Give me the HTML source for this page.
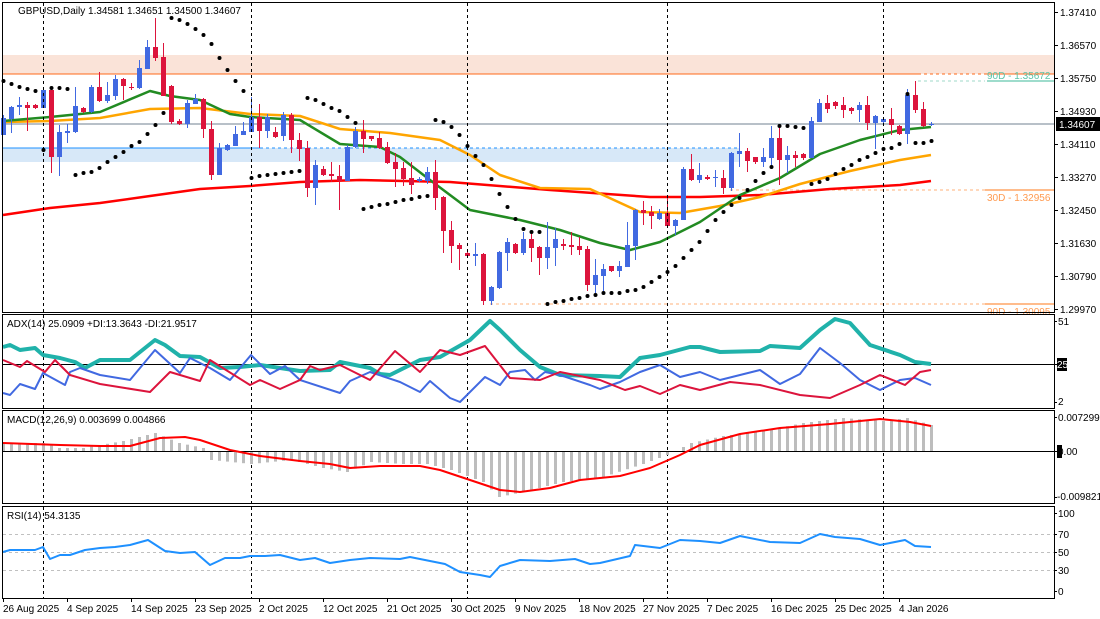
<!DOCTYPE html>
<html><head><meta charset="utf-8">
<style>
html,body{margin:0;padding:0;background:#fff;width:1100px;height:619px;overflow:hidden}
svg{display:block}
text{font-family:"Liberation Sans",sans-serif;font-size:10px;fill:#000}
</style></head>
<body>
<svg id="c" width="1100" height="619" viewBox="0 0 1100 619" xmlns="http://www.w3.org/2000/svg">
<!-- zones -->
<rect x="3" y="55" width="1051" height="19" fill="#fae3d8"/>
<rect x="3" y="148" width="737" height="14" fill="#d7e8f8"/>
<line x1="3" y1="74" x2="918" y2="74" stroke="#ff6a1a" stroke-width="1"/>
<line x1="918" y1="74" x2="985" y2="74" stroke="#ff6a1a" stroke-dasharray="3,3"/>
<line x1="985" y1="74" x2="1054" y2="74" stroke="#ff6a1a"/>
<line x1="918" y1="81" x2="985" y2="81" stroke="#9fd8c8" stroke-dasharray="3,3"/>
<line x1="987" y1="81" x2="1054" y2="81" stroke="#3cb89a"/>
<text x="987" y="79" style="fill:#5cc4a8">90D - 1.35672</text>
<line x1="3" y1="148" x2="260" y2="148" stroke="#1e90ff"/>
<line x1="260" y1="148" x2="740" y2="148" stroke="#1e90ff" stroke-dasharray="3,3"/>
<line x1="730" y1="190" x2="985" y2="190" stroke="#ffb27a" stroke-dasharray="3,3"/>
<line x1="985" y1="190" x2="1054" y2="190" stroke="#ff7a1a"/>
<text x="987" y="201" style="fill:#ff9a50">30D - 1.32956</text>
<line x1="490" y1="304" x2="985" y2="304" stroke="#ffb27a" stroke-dasharray="3,3"/>
<line x1="985" y1="304" x2="1054" y2="304" stroke="#ff7a1a"/>
<text x="987" y="315" style="fill:#ff9a50">90D - 1.30095</text>
<line x1="3" y1="124" x2="1054" y2="124" stroke="#708090"/>
<g id="ma"></g>
<g id="cd"></g>
<g id="sar"></g>
<!-- vertical separators -->
<g stroke="#000" stroke-dasharray="3,3" stroke-width="1">
<line x1="43.5" y1="3" x2="43.5" y2="598"/>
<line x1="251.5" y1="3" x2="251.5" y2="598"/>
<line x1="467.5" y1="3" x2="467.5" y2="598"/>
<line x1="667.5" y1="3" x2="667.5" y2="598"/>
<line x1="883.5" y1="3" x2="883.5" y2="598"/>
</g>
<!-- indicator lines -->
<line x1="3" y1="364.5" x2="1054" y2="364.5" stroke="#000"/>
<line x1="3" y1="451.5" x2="1054" y2="451.5" stroke="#000"/>
<g stroke="#c0c0c0" stroke-dasharray="3,3">
<line x1="3" y1="534.5" x2="1054" y2="534.5"/>
<line x1="3" y1="552.5" x2="1054" y2="552.5"/>
<line x1="3" y1="570.5" x2="1054" y2="570.5"/>
</g>
<g id="ind"></g>
<!-- pane borders -->
<g fill="none" stroke="#000" stroke-width="1">
<rect x="2.5" y="2.5" width="1052" height="310"/>
<rect x="2.5" y="314.5" width="1052" height="94"/>
<rect x="2.5" y="410.5" width="1052" height="93"/>
<rect x="2.5" y="506.5" width="1052" height="92"/>
</g>
<text x="18" y="14">GBPUSD,Daily  1.34581 1.34651 1.34500 1.34607</text>
<text x="7" y="327">ADX(14) 25.0909 +DI:13.3643 -DI:21.9517</text>
<text x="7" y="423">MACD(12,26,9) 0.003699 0.004866</text>
<text x="7" y="519">RSI(14) 54.3135</text>
<!-- right axis -->
<g id="ax"></g>
<rect x="1056" y="117" width="44" height="14" fill="#000"/>
<text x="1059" y="128" style="fill:#fff">1.34607</text>
<rect x="1057" y="358" width="10" height="13" fill="#000"/>
<text x="1057" y="368" style="fill:#fff">25</text>
<text x="1058" y="325">51</text>
<text x="1058" y="405">2</text>
<rect x="1057" y="445" width="5" height="13" fill="#000"/>
<text x="1058" y="455">0.00</text>
<text x="1058" y="421">0.007299</text>
<text x="1057" y="500">-0.009821</text>
<text x="1058" y="517">100</text>
<text x="1058" y="538">70</text>
<text x="1058" y="556">50</text>
<text x="1058" y="574">30</text>
<text x="1058" y="595">0</text>
<g id="dates"></g>
</svg>
<script>
var NS="http://www.w3.org/2000/svg";
function el(p,t,a,txt){var e=document.createElementNS(NS,t);for(var k in a)e.setAttribute(k,a[k]);if(txt!=null)e.textContent=txt;document.getElementById(p).appendChild(e);return e;}
function pl(p,pts,col,w){el(p,"polyline",{points:pts.map(function(q){return q[0]+","+q[1]}).join(" "),fill:"none",stroke:col,"stroke-width":w,"stroke-linejoin":"round"});}
// axis
var ax=[["1.37410",12],["1.36570",45],["1.35750",78],["1.34930",111],["1.34110",144],["1.33270",177],["1.32450",210],["1.31630",243],["1.30790",276],["1.29970",309]];
ax.forEach(function(a){el("ax","line",{x1:1054,y1:a[1]+.5,x2:1058,y2:a[1]+.5,stroke:"#000"});el("ax","text",{x:1060,y:a[1]+4},a[0]);});
[321,364,402,417,451,497,513,534,552,570,591].forEach(function(y){el("ax","line",{x1:1054,y1:y+.5,x2:1057,y2:y+.5,stroke:"#000"});});
var ds=["26 Aug 2025","4 Sep 2025","14 Sep 2025","23 Sep 2025","2 Oct 2025","12 Oct 2025","21 Oct 2025","30 Oct 2025","9 Nov 2025","18 Nov 2025","27 Nov 2025","7 Dec 2025","16 Dec 2025","25 Dec 2025","4 Jan 2026"];
ds.forEach(function(d,i){var x=3+64*i;el("dates","line",{x1:x+.5,y1:598,x2:x+.5,y2:602,stroke:"#000"});el("dates","text",{x:x,y:612},d);});
// candles [o,c,h,l]
var C=[[135,118,115,135],[119,107,106,133],[107,105,97,115],[105,108,102,131],[105,108,104,109],[108,90,89,108],[90,157,88,173],[157,132,125,176],[133,131,124,143],[132,106,87,133],
[108,112,107,113],[112,87,85,113],[87,101,72,102],[101,95,82,103],[96,79,75,100],[79,86,78,100],[87,88,83,90],[88,68,60,89],[69,47,40,69],[47,58,18,61],
[57,96,43,96],[86,122,85,124],[121,124,119,125],[124,103,100,128],[104,99,94,104],[99,129,98,138],[129,175,121,180],[175,148,143,175],[150,145,144,151],[146,134,126,146],
[135,131,122,135],[132,117,97,132],[117,131,104,148],[131,117,114,138],[132,137,127,138],[136,115,112,141],[115,140,113,153],[140,149,133,161],[148,188,141,197],[188,165,160,205],
[169,175,166,176],[174,176,162,182],[176,181,165,210],[181,147,145,181],[147,131,127,148],[131,139,120,153],[136,139,136,141],[138,148,132,149],[147,163,142,164],[162,169,153,187],
[168,179,162,186],[178,185,162,194],[181,179,177,182],[181,172,167,184],[172,198,160,210],[197,231,196,253],[230,246,221,263],[245,249,243,270],[253,256,252,258],[256,254,243,266],
[254,301,253,305],[301,287,286,305],[288,252,251,289],[253,242,238,271],[244,253,243,254],[253,239,232,255],[239,248,231,262],[247,258,246,275],[258,247,222,269],[248,239,228,266],
[244,246,239,250],[245,247,232,255],[246,250,237,255],[249,285,246,291],[285,275,259,293],[276,269,264,293],[266,271,266,272],[271,266,261,277],[267,245,222,267],[246,210,209,260],
[210,213,201,225],[212,216,206,229],[219,213,209,220],[213,226,198,227],[226,220,219,235],[220,169,167,220],[169,180,154,181],[180,175,163,183],[177,179,175,180],[178,177,170,187],
[178,188,170,194],[188,153,152,191],[154,151,133,167],[151,161,148,172],[157,162,157,164],[162,157,148,167],[158,138,126,167],[138,160,125,185],[160,155,146,173],[155,158,151,167],
[154,158,153,160],[158,121,117,158],[122,103,99,122],[103,109,95,113],[102,106,101,109],[105,110,97,118],[108,111,107,114],[110,105,102,122],[105,123,96,130],[123,116,115,149],
[122,119,117,125],[119,125,108,135],[126,134,125,135],[134,95,89,144],[95,110,81,113],[109,126,102,127],[125,124,122,126]];
C.forEach(function(b,k){var x=3+8*k,up=b[1]<b[0]||(b[1]==b[0]&&k==116),col=up?"#4169e1":"#dc143c";
var t=Math.min(b[0],b[1]),h=Math.max(Math.abs(b[0]-b[1]),1);
el("cd","line",{x1:x+.5,y1:b[2],x2:x+.5,y2:b[3],stroke:col});
el("cd","rect",{x:x-2,y:t,width:5,height:h,fill:col});});
// MAs
pl("ma",[[3,215],[50,208],[100,203],[150,196],[200,189],[250,186],[300,182],[360,180],[450,182],[550,190],[650,197],[700,197],[760,195],[830,189],[900,185],[931,181]],"#ff0000",2.5);
pl("ma",[[3,122],[50,121],[100,118],[150,109],[200,108],[250,114],[300,116],[340,129],[390,133],[440,140],[470,155],[500,175],[540,188],[590,189],[640,212],[680,213],[720,206],[760,197],[800,184],[850,171],[900,160],[931,155]],"#ffa500",2.5);
pl("ma",[[3,121],[50,117],[100,112],[150,91],[170,96],[200,100],[230,114],[250,117],[300,120],[340,144],[380,147],[400,157],[430,180],[470,210],[520,220],[560,230],[600,243],[630,250],[660,242],[700,222],[740,195],[780,178],[820,154],[860,140],[900,130],[931,127]],"#228b22",2.5);
// SAR
var S=[[3,81],[11,84],[19,87],[27,89],[35,91],[43,150],[51,88],[59,88],[67,89],[75,175],[83,173],[91,172],[99,168],[107,162],[115,157],[123,152],[131,146],[139,142],[147,134],[155,125],[163,113],[171,18],[179,20],[187,24],[195,29],[203,35],[211,44],[219,58],[227,70],[235,81],[243,91],[251,178],[259,176],[267,175],[275,174],[283,173],[291,172],[299,171],[307,98],[315,100],[323,104],[331,108],[339,111],[347,117],[355,123],[363,209],[371,207],[379,205],[387,204],[395,202],[403,200],[411,199],[419,197],[427,196],[435,120],[443,122],[451,127],[459,135],[467,146],[475,156],[483,165],[491,179],[499,194],[507,207],[515,219],[523,229],[531,232],[539,232],[547,304],[555,302],[563,301],[571,299],[579,298],[587,296],[595,295],[603,293],[611,293],[619,293],[627,291],[635,290],[643,287],[651,282],[659,277],[667,272],[675,266],[683,258],[691,250],[699,242],[707,231],[715,220],[723,212],[731,205],[739,198],[747,190],[755,181],[763,173],[771,167],[779,126],[787,126],[795,127],[803,128],[811,184],[819,182],[827,179],[835,174],[843,169],[851,165],[859,160],[867,157],[875,153],[883,149],[891,148],[899,144],[907,94],[915,143],[923,143],[931,141]];
S.forEach(function(p){el("sar","circle",{cx:p[0]+.5,cy:p[1],r:2,fill:"#000"});});
// MACD histogram
var H=[[0,-8],[5,-8],[7,-3],[10,-3],[15,-10],[19,-18],[22,-8],[25,-3],[26,8],[31,12],[36,8],[40,16],[43,20],[46,10],[50,12],[53,12],[56,18],[60,30],[62,45],[65,40],[70,30],[75,25],[80,12],[84,0],[86,-8],[90,-15],[95,-20],[100,-28],[105,-33],[110,-30],[113,-33],[116,-26]];
function hv(k){for(var i=0;i<H.length-1;i++){if(k>=H[i][0]&&k<=H[i+1][0]){var t=(k-H[i][0])/(H[i+1][0]-H[i][0]);return H[i][1]+t*(H[i+1][1]-H[i][1]);}}return 0;}
for(var k=0;k<117;k++){var v=hv(k),x=3+8*k;if(Math.abs(v)<1)continue;el("ind","rect",{x:x-1,y:v<0?451+v:452,width:3,height:Math.abs(v),fill:"#bdbdbd"});}
pl("ind",[[3,443],[60,445],[100,446],[130,446],[160,438],[185,437],[200,440],[230,450],[260,456],[300,461],[330,464],[350,468],[380,466],[420,466],[440,470],[470,480],[500,490],[520,492],[550,488],[580,480],[620,476],[650,468],[680,455],[700,445],[740,434],[780,428],[830,424],[880,419],[910,422],[931,426]],"#ff0000",2);
// ADX
pl("ind",[[3,347],[10,345],[20,350],[35,348],[43,355],[60,358],[75,362],[85,368],[100,360],[130,360],[155,340],[165,345],[180,356],[200,357],[220,368],[240,367],[260,365],[300,371],[330,370],[340,362],[370,368],[380,374],[390,375],[420,360],[440,357],[470,340],[490,321],[500,330],[520,350],[540,367],[560,375],[600,376],[620,377],[640,358],[660,355],[690,347],[700,347],[720,352],[760,351],[770,346],[800,348],[820,330],[835,319],[850,323],[870,345],[900,355],[915,362],[931,364]],"#20b2aa",4);
pl("ind",[[3,393],[10,395],[20,384],[35,389],[43,373],[65,385],[70,372],[80,368],[100,375],[130,380],[155,350],[180,373],[190,358],[210,368],[230,380],[251,355],[270,374],[285,366],[300,380],[340,393],[350,381],[370,372],[400,382],[420,392],[430,381],[450,398],[460,402],[485,377],[500,385],[510,372],[525,370],[535,380],[545,372],[560,375],[590,385],[600,389],[620,382],[640,372],[660,365],[680,377],[700,372],[720,380],[760,370],[780,384],[800,374],[820,348],[840,363],[860,380],[880,390],[900,380],[915,378],[931,385]],"#4169e1",2);
pl("ind",[[3,360],[20,367],[27,361],[45,372],[55,360],[70,375],[100,384],[125,388],[150,392],[170,372],[200,381],[210,360],[250,385],[260,380],[280,389],[300,380],[310,366],[320,370],[340,365],[370,380],[395,351],[420,372],[440,350],[460,355],[485,346],[510,378],[540,380],[560,372],[600,380],[625,390],[640,386],[660,394],[680,385],[700,390],[730,382],[760,385],[800,395],[830,398],[860,385],[880,375],[905,385],[920,372],[931,370]],"#dc143c",2);
// RSI
pl("ind",[[3,552],[10,550],[35,550],[43,547],[50,559],[60,555],[70,555],[85,550],[100,548],[115,547],[130,545],[148,540],[165,551],[180,553],[195,552],[210,565],[225,558],[240,558],[250,556],[265,556],[280,555],[300,560],[315,558],[330,563],[350,560],[370,558],[400,559],[410,557],[445,564],[460,572],[480,575],[490,577],[500,566],[520,560],[550,561],[575,559],[590,564],[600,563],[630,556],[635,545],[660,548],[680,540],[700,541],[720,543],[740,536],[770,542],[800,543],[820,534],[835,537],[860,539],[880,545],[905,540],[915,546],[931,547]],"#1e90ff",2);
</script>
</body></html>
